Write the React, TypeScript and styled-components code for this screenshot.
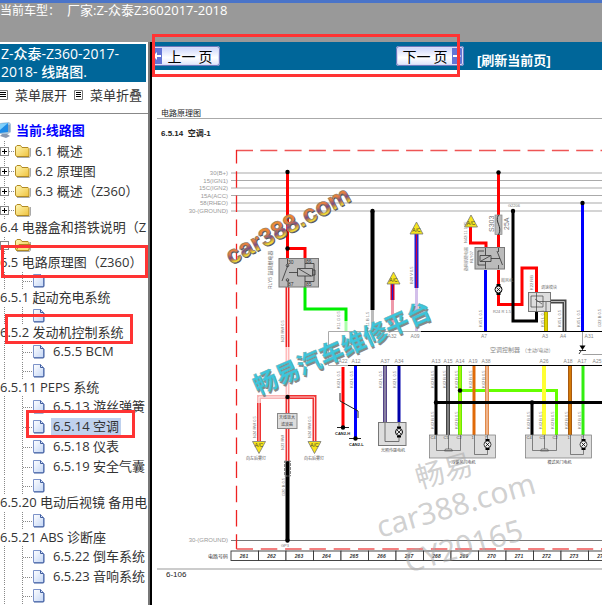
import React from "react";
import styled, { createGlobalStyle } from "styled-components";

const GlobalStyle = createGlobalStyle`
  * { box-sizing: border-box; }
  body {
    margin: 0;
    background: #fff;
    color: #333;
    font-family: "Open Sans", "Noto Sans CJK SC", sans-serif;
    font-size: 13px;
    text-spacing-trim: space-all;
  }
`;

const Page = styled.div`
  position: relative;
  display: flex;
  flex-direction: column;
  min-height: 100vh;
  overflow: hidden;
`;

const Header = styled.header`
  height: 42px;
  border-top: 3px solid #4a74c9;
  background: #999;
  color: #fff;
  line-height: 15px;
  white-space: pre;
`;

const Vehicle = styled.span`
  display: inline-block;
  width: 67px;
  font-size: 12px;
`;

const Body = styled.div`
  flex: 1;
  display: grid;
  grid-template-columns: 148px 4px minmax(0, 1fr);
`;

const Divider = styled.div`
  border-left: 2px solid #777;
  border-right: 2px solid #000;
`;

const Sidebar = styled.nav`
  overflow: hidden;
  padding-top: 2px;
  white-space: nowrap;
`;

const Title = styled.h1`
  margin: 0 2px 0 0;
  padding: 1px;
  background: #069;
  color: #fff;
  font-size: 14px;
  font-weight: 500;
  line-height: 18px;
`;

const MenuBar = styled.div`
  display: flex;
  margin-bottom: 7px;
  padding: 3px 0 8px;
  border-bottom: 1px solid #888;
`;

const MenuButton = styled.button`
  display: flex;
  align-items: center;
  gap: 7px;
  width: 74px;
  padding: 0;
  border: 0;
  background: none;
  color: #333;
  font: inherit;
  line-height: 20px;
  white-space: nowrap;
`;

const Current = styled.div`
  display: flex;
  align-items: center;
  gap: 4px;
  color: #00f;
  font-weight: 700;
  line-height: 18px;
  padding-bottom: 2px;
`;

const Tree = styled.ul`
  margin: 0;
  padding: 0;
  list-style: none;
`;

const Node = styled.li<{ $empty?: boolean }>`
  display: flex;
  align-items: center;
  height: ${(p) => (p.$empty ? 18 : 20)}px;
`;

const WrappedNode = styled.li`
  line-height: 17px;
`;

const Guides = styled.span<{ $file?: boolean }>`
  display: flex;
  align-items: center;
  align-self: stretch;
  flex: none;
  width: ${(p) => (p.$file ? 33 : 15)}px;
`;

const Link = styled.a<{ $active?: boolean; $file?: boolean }>`
  padding: 0 2px;
  margin-left: ${(p) => (p.$file ? 6 : 2)}px;
  background: ${(p) => (p.$active ? "#bfd1ee" : "none")};
  color: #333;
  line-height: 17px;
  text-decoration: none;
`;

const WrappedLink = styled.a`
  color: #333;
  text-decoration: none;
`;

const Toggle = styled.button`
  display: block;
  flex: none;
  width: 15px;
  height: 100%;
  padding: 0;
  border: 0;
  background: none;
`;

const Main = styled.main`
  overflow: hidden;
`;

const Toolbar = styled.div`
  display: flex;
  align-items: center;
  height: 28px;
  background: #069;
`;

const PageButton = styled.button<{ $next?: boolean }>`
  display: flex;
  flex-direction: ${(p) => (p.$next ? "row-reverse" : "row")};
  align-items: stretch;
  width: 68px;
  height: 20px;
  margin-left: ${(p) => (p.$next ? 176 : 0)}px;
  padding: 0;
  overflow: hidden;
  border: 2px solid #d9dcf5;
  border-left-width: ${(p) => (p.$next ? 2 : 0)}px;
  border-radius: 3px;
  outline: 1px solid #6d78bd;
  outline-offset: -1px;
  background: linear-gradient(#cfd7fb, #fff 60%, #e3e7fc);
  color: #000;
  font-family: "Noto Sans CJK SC", sans-serif;
  font-size: 14px;
  line-height: 16px;
  white-space: nowrap;
`;

const ButtonLabel = styled.span`
  flex: 1;
  text-align: center;
`;

const Refresh = styled.a`
  margin-left: 13px;
  padding-top: 10px;
  color: #fff;
  font-family: "Liberation Sans", "Noto Sans CJK SC", sans-serif;
  font-weight: 700;
  line-height: 18px;
  text-decoration: none;
`;

const Sheet = styled.article`
  padding-top: 37px;
  color: #222;
  font-size: 8px;
`;

const Chapter = styled.div`
  margin-left: 5px;
  padding-left: 4px;
  border-bottom: 1px solid #aaa;
  line-height: 11px;
`;

const Section = styled.h2`
  margin: 0;
  padding: 9px 9px 1px;
  font-family: "Liberation Sans", "Noto Sans CJK SC", sans-serif;
  font-size: 8px;
  line-height: 11px;
`;

const Drawing = styled.svg`
  display: block;
  width: 100%;
  height: auto;
  overflow: visible;
  font-family: "Liberation Sans", "Noto Sans CJK SC", sans-serif;
`;

const Footer = styled.footer`
  margin: 2px 0 0 5px;
  padding: 0 9px;
  border-top: 2px solid #ccc;
  font-family: "Liberation Sans", sans-serif;
  line-height: 9px;
`;

const Mark = styled.div<{ $x: number; $y: number; $w: number; $h: number }>`
  position: absolute;
  left: ${(p) => p.$x}px;
  top: ${(p) => p.$y}px;
  width: ${(p) => p.$w}px;
  height: ${(p) => p.$h}px;
  border: 3px solid #f33;
  pointer-events: none;
`;

const ListIcon = () => (
  <svg width="8" height="12" viewBox="0 0 8 12">
    <path d="M0 1.5H7.5V10.500H0" fill="#fff" stroke="#777" />
    <path d="M0 3.500H6M0 5.500H6M0 7.500H6" stroke="#000" />
  </svg>
);

const BoxedListIcon = () => (
  <svg width="9" height="12" viewBox="0 0 9 12">
    <path d="M.5 1.500H8.500V10.500H.5Z" fill="#fff" stroke="#777" />
    <path d="M2 3.500H7M2 5.500H7M2 7.500H7" stroke="#000" />
  </svg>
);

const ComputerIcon = () => (
  <svg width="12" height="16" viewBox="0 0 12 16">
    <path d="M0 1L9 0L11 2V10L8 12H0Z" fill="#a9c4d8" />
    <path d="M0 2L8 1V10L0 11Z" fill="#1d8be6" />
    <path d="M0 2L8 1L0 8Z" fill="#7fd0fb" />
    <path d="M2 12H7L10 14L6 16L0 14Z" fill="#8b99b0" />
    <path d="M9 3V10" stroke="#6784a4" />
  </svg>
);

const FolderIcon = ({ open }: { open?: boolean }) => (
  <svg width="16" height="14" viewBox="0 0 16 14">
    <defs>
      <linearGradient id="folder" x2="1" y2="1">
        <stop offset="0" stopColor="#fff8b5" />
        <stop offset="1" stopColor="#efc23e" />
      </linearGradient>
    </defs>
    <path d="M2 13.500H14.500L15.500 12V4" fill="none" stroke="#aaa" />
    <path d="M.5 3L2 1.500H5.500L7 3.500H13L14 4.500V12.500H1.500L.5 11Z" fill="url(#folder)" stroke="#b18a22" />
    {open && <path d="M1.500 12.500L4 6.500H15.500L13.500 12.500Z" fill="#fbe27b" stroke="#b18a22" />}
  </svg>
);

const FileIcon = () => (
  <svg width="12" height="15" viewBox="0 0 12 15">
    <defs>
      <linearGradient id="file" x2="1" y2="1">
        <stop offset="0" stopColor="#fff" />
        <stop offset="1" stopColor="#c4d6f5" />
      </linearGradient>
    </defs>
    <path d="M.5 1.500H7.500L10.500 4.500V13.500H.5Z" fill="url(#file)" stroke="#7d93c9" />
    <path d="M7.500 1.500V4.500H10.500M11 5V13.500L10 14H1" fill="none" stroke="#3e5c9e" />
  </svg>
);

const Expander = ({ open }: { open?: boolean }) => (
  <svg width="15" height="100%" viewBox="0 0 15 20" preserveAspectRatio="xMidYMid slice">
    <path d="M4.500 0V20M9 10.500H15" stroke="#888" strokeDasharray="1 1" />
    <rect x=".5" y="6.500" width="8" height="8" fill="#fff" stroke="#888" />
    <path d={open ? "M2 10.500H7" : "M2 10.500H7M4.500 8V13"} stroke="#000" />
  </svg>
);

const FileGuide = () => (
  <svg width="33" height="100%" viewBox="0 0 33 20" preserveAspectRatio="xMidYMid slice">
    <path d="M4.500 0V20M22.500 0V20M23 11.500H33" stroke="#888" strokeDasharray="1 1" />
  </svg>
);

type Item = { kind: "folder" | "file" | "line"; text?: string; open?: boolean; active?: boolean };

const items: Item[] = [
  { kind: "folder", text: "6.1 概述" },
  { kind: "folder", text: "6.2 原理图" },
  { kind: "folder", text: "6.3 概述（Z360）" },
  { kind: "folder" },
  { kind: "line", text: "6.4 电器盒和搭铁说明（Z" },
  { kind: "folder", open: true },
  { kind: "line", text: "6.5 电路原理图（Z360）" },
  { kind: "file" },
  { kind: "line", text: "6.5.1 起动充电系统" },
  { kind: "file" },
  { kind: "line", text: "6.5.2 发动机控制系统" },
  { kind: "file", text: "6.5.5 BCM" },
  { kind: "file" },
  { kind: "line", text: "6.5.11 PEPS 系统" },
  { kind: "file", text: "6.5.13 游丝弹簧" },
  { kind: "file", text: "6.5.14 空调", active: true },
  { kind: "file", text: "6.5.18 仪表" },
  { kind: "file", text: "6.5.19 安全气囊" },
  { kind: "file" },
  { kind: "line", text: "6.5.20 电动后视镜 备用电" },
  { kind: "file" },
  { kind: "line", text: "6.5.21 ABS 诊断座" },
  { kind: "file", text: "6.5.22 倒车系统" },
  { kind: "file", text: "6.5.23 音响系统" },
  { kind: "file" },
];

const TreeItem = ({ item }: { item: Item }) => {
  if (item.kind === "line") {
    return (
      <WrappedNode>
        <WrappedLink href="#">{item.text}</WrappedLink>
      </WrappedNode>
    );
  }
  const file = item.kind === "file";
  return (
    <Node $empty={!item.text}>
      <Guides $file={file}>
        {file ? (
          <FileGuide />
        ) : (
          <Toggle aria-label={item.open ? "收起" : "展开"}>
            <Expander open={item.open} />
          </Toggle>
        )}
      </Guides>
      {file ? <FileIcon /> : <FolderIcon open={item.open} />}
      {item.text && (
        <Link href="#" $active={item.active} $file={file}>
          {item.text}
        </Link>
      )}
    </Node>
  );
};

const Wire = ({ d, c, w = 3 }: { d: string; c: string; w?: number }) => (
  <path d={d} stroke={c} strokeWidth={w} fill="none" />
);

const Striped = ({ d, c, core }: { d: string; c: string; core: string }) => (
  <>
    <Wire d={d} c={c} w={4} />
    <Wire d={d} c={core} w={1} />
  </>
);

const Dot = ({ x, y }: { x: number; y: number }) => <circle cx={x} cy={y} r="2.2" fill="#000" />;

const Warning = ({ x, y, down }: { x: number; y: number; down?: boolean }) => (
  <g transform={`translate(${x} ${y})`}>
    <path d={down ? "M-6.500 0H6.500L0 12Z" : "M0 0L6.500 12H-6.500Z"} fill="#f7e51b" stroke="#777" strokeWidth=".8" />
    <text y={down ? 5 : 10} fontSize="5" textAnchor="middle" fill="#443">A/C</text>
  </g>
);

const VLabel = ({ x, y, t, s = 4 }: { x: number; y: number; t: string; s?: number }) => (
  <text transform={`translate(${x} ${y}) rotate(-90)`} fontSize={s} fill="#777">{t}</text>
);

const Motor = ({ x, y }: { x: number; y: number }) => (
  <g stroke="#000" fill="none">
    <path d={`M${x - 2} ${y - 4.5}h4M${x - 2} ${y + 4.5}h4`} strokeWidth="2" />
    <circle cx={x} cy={y} r="3.500" fill="#eee" />
    <path d={`M${x - 2} ${y - 2}l4 4m0 -4l-4 4`} strokeWidth=".8" />
  </g>
);

const DoorMotor = ({ x, label }: { x: number; label: string }) => (
  <g fill="none" stroke="#555" strokeWidth=".7">
    <rect x={x} y="435" width="66" height="23" fill="#ddd" stroke="#777" />
    <path d={`M${x + 7} 435V450.500H${x + 31}V435M${x + 19} 435V449M${x + 15} 451L${x + 16} 449H${x + 22}L${x + 23} 451ZM${x + 45} 435V454.500H${x + 58}V435`} />
    <Motor x={x + 58} y={444.5} />
    <g fill="#444" stroke="none" fontSize="4">
      <text x={x + 1} y="439">C4</text>
      <text x={x + 14} y="439">C5</text>
      <text x={x + 27} y="439">C2</text>
      <text x={x + 42} y="439">1</text>
      <text x={x + 55} y="439">7</text>
      <text x={x + 34} y="464" textAnchor="middle">{label}</text>
    </g>
  </g>
);

const buses: [number, string][] = [
  [173, "30(B+)"],
  [180.5, "15(IGN1)"],
  [188, "15C(IGN2)"],
  [195.5, "15A(ACC)"],
  [203, "58(RHEO)"],
  [211, "30-(GROUND)"],
];

const pins: [number, number, string][] = [
  [392, 338, "A32"], [415, 338, "A09"], [484, 338, "A7"], [545, 338, "A3"], [563, 338, "A4"], [589, 338, "A31"],
  [343, 363, "A22"], [356, 363, "A12"], [385, 363, "A37"], [399, 363, "A34"], [436, 363, "A13"], [448, 363, "A15"],
  [460, 363, "A14"], [473, 363, "A19"], [486, 363, "A38"], [544, 363, "A26"], [568, 363, "A18"], [582, 363, "A17"], [597, 363, "A25"],
];

const cells = Array.from({ length: 14 }, (_, i) => 261 + i);

const Diagram = () => (
  <Drawing viewBox="152 140 450 426" role="img" aria-label="空调电路原理图">
    <defs>
      <linearGradient id="brand" x1="0" y1="0" x2="0" y2="1">
        <stop offset="0.2" stopColor="#ef8d2c" />
        <stop offset="0.45" stopColor="#e27c43" />
        <stop offset="0.6" stopColor="#7b4a86" />
        <stop offset="0.7" stopColor="#c48f44" />
        <stop offset="0.8" stopColor="#f5e52e" />
      </linearGradient>
    </defs>

    {buses.map(([y, name]) => (
      <g key={name}>
        <path d={`M231 ${y}H602`} stroke="#aaa" strokeWidth="1.200" />
        <text x="228" y={y + 2} fontSize="6" textAnchor="end" fill="#999">{name}</text>
      </g>
    ))}
    <path d="M231 540.500H602" stroke="#777" />
    <text x="228" y="542" fontSize="6" textAnchor="end" fill="#999">30-(GROUND)</text>

    <path d="M236 150.500H602" stroke="#e55" strokeWidth="1.500" strokeDasharray="17 7.300" />
    <path d="M236.500 150V549" stroke="#e22" strokeWidth="1.300" strokeDasharray="16.500 7.700" strokeDashoffset="3" />
    <path d="M236.500 549H602" stroke="#e55" strokeWidth="1.500" strokeDasharray="16.500 7.800" />

    <path d="M602 331.500H421" stroke="#000" />
    <path d="M421 331.500H328.500V365.500H348" stroke="#aaa" fill="none" />
    <path d="M348 365.500H602" stroke="#000" />

    <Wire d="M287.500 172V258M287.500 248.500H305V258" c="#f00" />
    <Striped d="M287.500 287V347" c="#e22" core="#fcc" />
    <Striped d="M287.500 347V397" c="#fbb" core="#fee" />
    <Wire d="M305 287V309H346V321" c="#0e0" />
    <Wire d="M346 321V331" c="#afa" />
    <Striped d="M287.500 397H259V405" c="#f9b5b5" core="#fee" />
    <Striped d="M259 403V441" c="#e33" core="#fcc" />
    <Striped d="M287.500 397H314.500V441" c="#e33" core="#fcc" />
    <Striped d="M287.500 397V461" c="#e33" core="#fcc" />
    <Wire d="M287.500 461V540" c="#000" w={4} />
    <rect x="284.500" y="461" width="6" height="15" fill="none" stroke="#888" strokeDasharray="3 1" />
    <Wire d="M372.500 211V310" c="#000" w={4} />
    <Wire d="M372.500 310V331" c="#bbb" />
    <Striped d="M392.500 284V300" c="#c03" core="#22c" />
    <Wire d="M392.500 300V331" c="#e9a" />
    <Striped d="M416.500 234V288" c="#22c" core="#c04" />
    <Wire d="M416.500 288V331" c="#d3bfea" />

    <rect x="279" y="258.500" width="39.500" height="28.500" fill="#bbb" stroke="#777" />
    <g fill="none" stroke="#333" strokeWidth=".8">
      <path d="M287.500 259V264M282 281L288 265M288 280V287M289 272.500H297.500M305 259V268M305 276V287M297.500 268.500H312.500V276H297.500ZM299 269L311 276M305 263.500H314V281.500H305M313 270H315V275H313" />
      <circle cx="287.500" cy="265.500" r="1.300" />
      <circle cx="287.500" cy="280" r="1.300" />
    </g>
    <g fontSize="5" fill="#333">
      <text x="288" y="264">30</text><text x="306" y="263">86</text>
      <text x="288" y="286">87</text><text x="306" y="286">85</text>
    </g>
    <rect x="277.500" y="413.500" width="19.500" height="15" fill="#ddd" stroke="#888" />
    <text x="287" y="419" fontSize="4" textAnchor="middle" fill="#444">天线放大</text>
    <text x="287" y="426" fontSize="4" textAnchor="middle" fill="#444">滤波器</text>

    <Wire d="M343 367V427" c="#f00" />
    <Wire d="M355.500 366V437" c="#00f" />
    <path d="M340 393V401L358 411V418M337 427.500H349M349 438.500H361" fill="none" stroke="#222" />
    <Dot x={343} y={427.5} /><Dot x={355.5} y={438.5} />
    <g fontSize="4" fontWeight="700" fill="#222">
      <text x="335" y="435">CAN2-H</text><text x="349" y="446">CAN2-L</text>
    </g>
    <Striped d="M385 366V423" c="#548" core="#bbb" />
    <Wire d="M399 366V423" c="#00a" />
    <rect x="378.500" y="422.500" width="27.500" height="23" fill="#ddd" stroke="#777" />
    <path d="M385 423V441.500H399V423" fill="none" stroke="#555" strokeWidth=".8" />
    <Motor x={399} y={432} />
    <text x="393" y="452" fontSize="4" textAnchor="middle" fill="#555">光照传感电机</text>

    <Wire d="M498.500 172V247M498.500 270V304.500H522V268H536.500V292M470.500 227V243H486V247" c="#f00" />
    <Wire d="M513 211V321H536.500V312" c="#000" />
    <Wire d="M485.500 270V331M582.500 203V331" c="#00f" />
    <Striped d="M546 312V331" c="#bba900" core="#ff0" />
    <Striped d="M551 301.500H564.500V331" c="#444" core="#bbb" />
    <rect x="495" y="215" width="7" height="19.500" fill="#bbb" stroke="#888" strokeWidth=".7" />
    <path d="M498.500 215C494 222 503 226 498.500 235" fill="none" stroke="#333" />
    <VLabel x={494} y={232} t="S303" s={7} />
    <VLabel x={509} y={230} t="25A" s={7} />
    <rect x="475" y="247.500" width="29.500" height="21.500" fill="#bbb" stroke="#777" />
    <path d="M485.500 248V255M480 255.500H491V261.500H480ZM481 261L490 256M485.500 262V269M484 251H478V265H485M491 258.500H500M497 251L502.500 265M498.500 248V252M498.500 265V269" fill="none" stroke="#333" strokeWidth=".8" />
    <Motor x={498.5} y={289.5} />
    <rect x="528.500" y="292.500" width="22" height="19" fill="#ddd" stroke="#777" />
    <path d="M536.500 293V312M531 296H543V307H531ZM537 301.500H551M535 299L542 304M546 302V312" fill="none" stroke="#444" strokeWidth=".7" />
    <path d="M582.500 332V351M582.500 354.500H602" fill="none" stroke="#777" strokeWidth=".7" />
    <path d="M579.500 345.500H585.500L582.500 350Z" />
    <path d="M579 350.500H586M581 351L579 354" stroke="#000" strokeWidth=".8" />

    <Wire d="M436 366V435M436 402.500H602M532 402.500V435" c="#000" />
    <Striped d="M448 366V435" c="#444" core="#bbb" />
    <Striped d="M460 366V435" c="#6e0" core="#ee2" />
    <Wire d="M460 390.500H556.500V435" c="#6f0" />
    <Wire d="M474 366V435" c="#e06a08" />
    <Striped d="M487 366V435" c="#e08a4a" core="#fdc" />
    <Wire d="M544 366V435" c="#ff3" w={4} />
    <Striped d="M570 366V435" c="#a85a10" core="#f90" />
    <Wire d="M583 366V435" c="#3e1" />
    <Wire d="M436 402.500H602" c="#000" />
    <DoorMotor x={429.5} label="冷暖风门电机" />
    <DoorMotor x={525.5} label="模式风门电机" />
    <Dot x={287.5} y={172} /><Dot x={287.5} y={248.5} /><Dot x={287.5} y={397} /><Dot x={287.5} y={540.5} />
    <Dot x={372.5} y={211} /><Dot x={498.5} y={172.5} /><Dot x={513} y={211} /><Dot x={582.5} y={203} />
    <Dot x={460} y={390.5} /><Dot x={436} y={402.5} /><Dot x={532} y={402.5} />

    <Warning x={416.5} y={222} /><Warning x={393.500} y={272} /><Warning x={471} y={215} />
    <Warning x={259} y={441.5} down /><Warning x={314.5} y={441.5} down />
    <text x="256" y="460" fontSize="4" textAnchor="middle" fill="#555">向左后雾灯</text>
    <text x="314" y="460" fontSize="4" textAnchor="middle" fill="#555">向右后雾灯</text>

    <g fontSize="5" textAnchor="middle" fill="#888">
      {pins.map(([x, y, t]) => <text key={`${x}-${y}`} x={x} y={y}>{t}</text>)}
    </g>
    <text x="490" y="352" fontSize="6" fill="#888">空调控制器</text>
    <text x="522" y="352" fontSize="5" fill="#888">（主动/电动）</text>
    <VLabel x={272} y={289} t="RLY5 鼓风继电器" s={5} />
    <VLabel x={468} y={271} t="鼓风机继电器" />
    <VLabel x={473} y={263} t="RLY07" />
    <VLabel x={467} y={243} t="N42/11 1.25" />
    <VLabel x={284} y={342} t="N23 RW 0.5" />
    <VLabel x={340} y={329} t="K11 G 0.5" />
    <VLabel x={369} y={329} t="K11 B 1.5" />
    <VLabel x={413} y={284} t="B28 V 0.5" />
    <VLabel x={256} y={438} t="N24 RW 0.5" />
    <VLabel x={311} y={438} t="N24 RW 0.5" />
    <VLabel x={284} y={450} t="N23 RW" />
    <VLabel x={285} y={496} t="G20 B 0.5" />
    {[340, 353, 382, 396].map((x) => <VLabel key={x} x={x} y={388} t="K42 L 0.5" />)}
    {[434, 446, 458, 472, 485].map((x) => <VLabel key={x} x={x} y={388} t="K42 B 0.5" />)}
    {[434, 458, 530, 542, 554, 568, 581].map((x) => <VLabel key={x} x={x} y={429} t="K42 B 0.5" />)}
    {[482, 544, 561, 580].map((x) => <VLabel key={x} x={x} y={327} t="K45 L 0.5" />)}
    <VLabel x={533} y={290} t="K22 R/B" /><VLabel x={601} y={327} t="G22 B 0.5" />
    <g fontSize="4" fill="#777">
      <text x="508" y="207">G2206</text><text x="501" y="282">鼓风机</text><text x="541" y="289">调速模块</text>
      <text x="493" y="313">R24 R 1.5</text><text x="281" y="547">GP3</text>
    </g>

    <text x="228" y="558" fontSize="5" textAnchor="end" fill="#333">电路号码</text>
    {cells.map((n, i) => (
      <g key={n}>
        <rect x={231 + i * 27.5} y="551" width="27.500" height="9.500" fill="#fff" stroke="#333" strokeWidth=".9" />
        <text x={244 + i * 27.5} y="558" fontSize="5" fontStyle="italic" fontWeight="700" textAnchor="middle" fill="#333">{n}</text>
      </g>
    ))}

    <text transform="translate(232 266) rotate(-28)" fontSize="25" fontWeight="700" fill="#555">car388.com</text>
    <text transform="translate(231 265) rotate(-28)" fontSize="25" fontWeight="700" fill="url(#brand)" stroke="#777" strokeWidth=".5">car388.com</text>
    <g fontFamily="Noto Sans CJK SC, sans-serif" fontWeight="700" fontSize="24">
      <text transform="translate(259 397) rotate(-24)" fill="#888">畅易汽车维修平台</text>
      <text transform="translate(258 395) rotate(-24)" fill="#3cc5dc" stroke="#6aa" strokeWidth=".4">畅易汽车维修平台</text>
    </g>
    <g fill="#aaa" fillOpacity=".55" fontFamily="Noto Sans, Noto Sans CJK SC, sans-serif">
      <text transform="translate(419 489) rotate(-16)" fontSize="29">畅易</text>
      <text transform="translate(380 538) rotate(-16)" fontSize="30">car388.com</text>
      <text transform="translate(408 573) rotate(-16)" fontSize="30">CY20165</text>
    </g>
  </Drawing>
);

const Arrow = ({ next }: { next?: boolean }) => (
  <svg width="10" height="16" viewBox="0 0 10 16" style={undefined}>
    <path d="M0 0H10V16H0Z" fill="#6475d6" />
    <path d={next ? "M1 7H5V4L9 8L5 12V9H1Z" : "M9 7H5V4L1 8L5 12V9H9Z"} fill="#fff" />
  </svg>
);

export default function App() {
  return (
    <Page>
      <GlobalStyle />
      <Header>
        <Vehicle>当前车型：</Vehicle>厂家:Z-众泰Z3602017-2018
      </Header>
      <Body>
        <Sidebar>
          <Title>Z-众泰-Z360-2017-<br />2018- 线路图.</Title>
          <MenuBar>
            <MenuButton><ListIcon />菜单展开</MenuButton>
            <MenuButton><BoxedListIcon />菜单折叠</MenuButton>
          </MenuBar>
          <Current><ComputerIcon />当前:线路图</Current>
          <Tree>
            {items.map((item, i) => <TreeItem key={i} item={item} />)}
          </Tree>
        </Sidebar>
        <Divider />
        <Main>
          <Toolbar>
            <PageButton><Arrow /><ButtonLabel>上一 页</ButtonLabel></PageButton>
            <PageButton $next><Arrow next /><ButtonLabel>下一 页</ButtonLabel></PageButton>
            <Refresh href="#">[刷新当前页]</Refresh>
          </Toolbar>
          <Sheet>
            <Chapter>电路原理图</Chapter>
            <Section>6.5.14&nbsp; 空调-1</Section>
            <Diagram />
            <Footer>6-106</Footer>
          </Sheet>
        </Main>
      </Body>
      <Mark $x={152} $y={34} $w={308} $h={43} />
      <Mark $x={1} $y={245} $w={147} $h={33} />
      <Mark $x={5} $y={314} $w={128} $h={30} />
      <Mark $x={26} $y={410} $w={109} $h={28} />
    </Page>
  );
}
